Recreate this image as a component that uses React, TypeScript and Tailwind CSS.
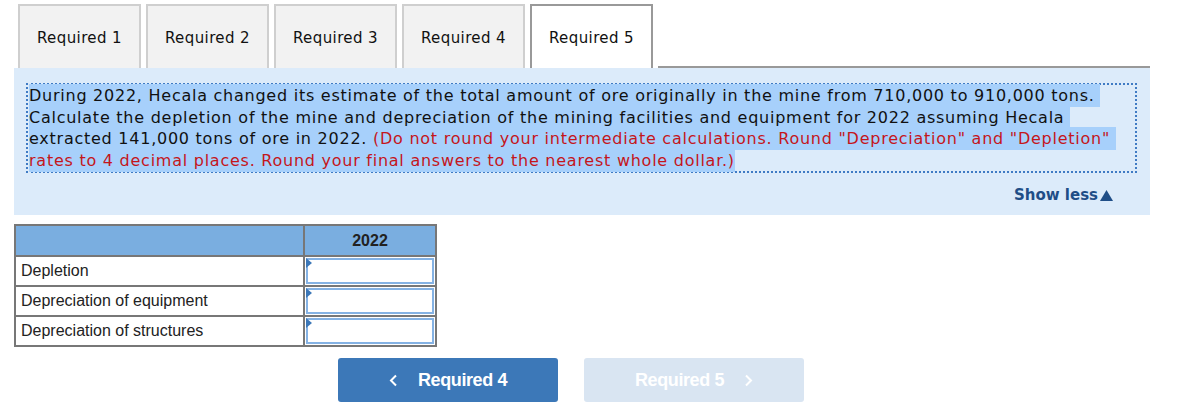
import React from 'react';

const tabs = ['Required 1', 'Required 2', 'Required 3', 'Required 4', 'Required 5'];

const rows = ['Depletion', 'Depreciation of equipment', 'Depreciation of structures'];

const AnswerCell: React.FC = () => (
  <td className="border-2 border-[#777] p-[1px] h-[30px]">
    <div className="relative h-[26px] bg-white border-2 border-[#84b2e4]">
      {/* little blue marker in the corner */}
      <span className="absolute -left-[2px] -top-[2px] w-0 h-0 border-t-[5px] border-b-[5px] border-l-[6px] border-t-transparent border-b-transparent border-l-[#3d78b8]" />
    </div>
  </td>
);

const App: React.FC = () => {
  return (
    <div className="w-[1184px] h-[420px] bg-white overflow-hidden">
      {/* tab strip */}
      <div className="ml-[18px] mt-[4px] w-[1132px] h-[64px] flex items-stretch">
        {tabs.map((tab, i) => {
          const active = i === tabs.length - 1;
          return (
            <div
              key={tab}
              className={`w-[123px] mr-[5px] last:mr-0 pt-[3px] flex items-center justify-center border-2 border-b-0 text-[15px] tracking-[0.4px] text-[#111] font-['DejaVu_Sans',Verdana,sans-serif] ${
                active ? 'bg-white border-[#999] relative z-10' : 'bg-[#f2f2f2] border-[#cfcfcf]'
              }`}
            >
              {tab}
            </div>
          );
        })}
        <div className="flex-1 border-b-2 border-[#999]" />
      </div>

      {/* question panel */}
      <div className="ml-[14px] w-[1136px] h-[147px] bg-[#dcebfa] pt-[15px] font-['DejaVu_Sans',Verdana,sans-serif]">
        <div className="ml-[12px] w-[1111px] h-[90px] border-2 border-dotted border-[#3f7bc4] pl-[1px] text-[16px] leading-[21.7px] tracking-[0.75px] whitespace-nowrap">
          <span className="bg-[#a7d0fb] py-[2px] box-decoration-clone text-[#111]">
            During 2022, Hecala changed its estimate of the total amount of ore originally in the mine from 710,000 to 910,000 tons.{'\u00a0'}
            <br />
            Calculate the depletion of the mine and depreciation of the mining facilities and equipment for 2022 assuming Hecala{'\u00a0'}
            <br />
            extracted 141,000 tons of ore in 2022.{' '}
            <span className="text-[#c4161c]">
              (Do not round your intermediate calculations. Round "Depreciation" and "Depletion"{'\u00a0'}
              <br />
              rates to 4 decimal places. Round your final answers to the nearest whole dollar.)
            </span>
          </span>
        </div>
        <div className="flex justify-end pr-[37px] mt-[11px]">
          <button className="flex items-center text-[15px] font-bold text-[#1f4e87]">
            Show less
            <svg width="13" height="11" viewBox="0 0 13 11" className="ml-[2px]">
              <polygon points="6.5,0 13,11 0,11" fill="#1f4e87" />
            </svg>
          </button>
        </div>
      </div>

      {/* answer table */}
      <table className="ml-[14px] mt-[9px] border-collapse font-['Liberation_Sans',Arial,sans-serif] text-[16px] text-[#222]">
        <thead>
          <tr className="bg-[#7aaee0] h-[31px]">
            <th className="border-2 border-[#777] w-[289px]" />
            <th className="border-2 border-[#777] w-[132px] font-bold text-center">2022</th>
          </tr>
        </thead>
        <tbody>
          {rows.map((r) => (
            <tr key={r}>
              <td className="border-2 border-[#777] pl-[5px] h-[30px] bg-white">{r}</td>
              <AnswerCell />
            </tr>
          ))}
        </tbody>
      </table>

      {/* prev / next */}
      <div className="w-[1142px] mt-[11px] flex justify-center gap-[26px] font-['Liberation_Sans',Arial,sans-serif]">
        <button className="w-[220px] h-[44px] rounded-[3px] bg-[#3c78b8] text-white font-bold text-[18px] flex items-center justify-center tracking-[-0.4px]">
          <svg width="9" height="13" viewBox="0 0 9 13" className="mr-[20px]">
            <polyline points="7,1.5 2,6.5 7,11.5" fill="none" stroke="white" strokeWidth="2" />
          </svg>
          Required 4
        </button>
        <button className="w-[220px] h-[44px] rounded-[3px] bg-[#d9e5f2] text-white font-bold text-[18px] flex items-center justify-center tracking-[-0.4px]">
          Required 5
          <svg width="9" height="13" viewBox="0 0 9 13" className="ml-[20px]">
            <polyline points="2,1.5 7,6.5 2,11.5" fill="none" stroke="white" strokeWidth="2" />
          </svg>
        </button>
      </div>
    </div>
  );
};

export default App;
